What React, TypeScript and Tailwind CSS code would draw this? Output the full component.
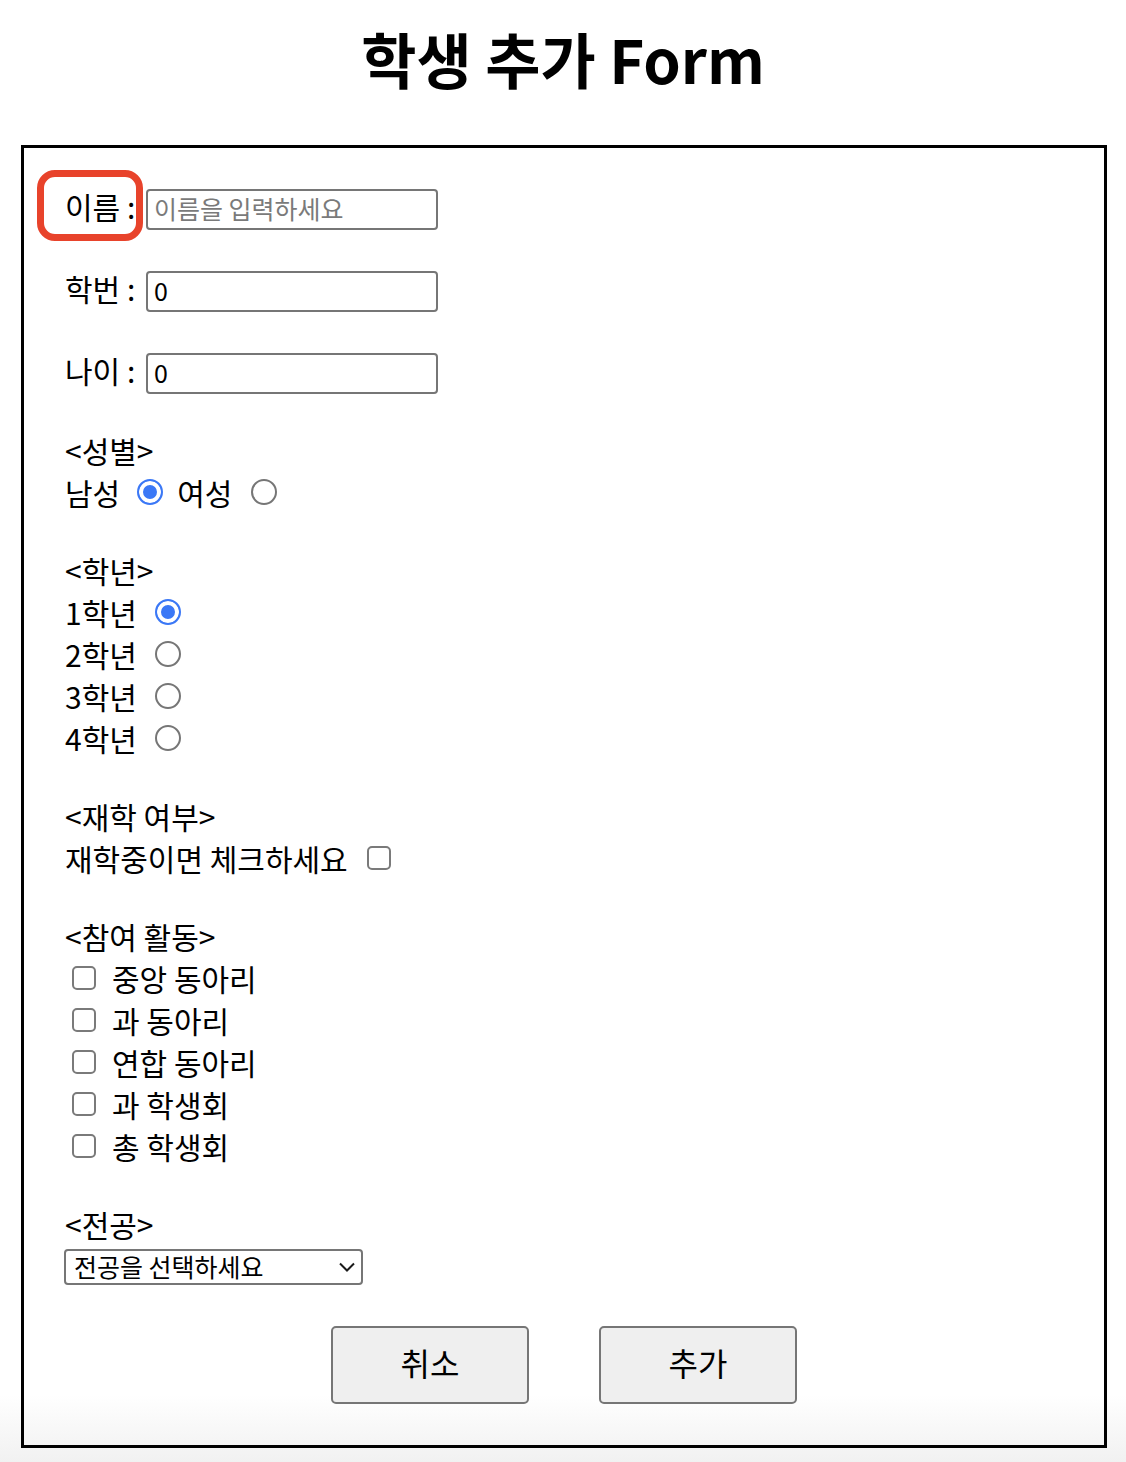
import { useState } from "react";

const font = { fontFamily: '"Noto Sans CJK KR", "Noto Sans", sans-serif' };

const radioClass =
  "appearance-none m-0 w-[26px] h-[26px] shrink-0 rounded-full border-2 border-[#767676] bg-white checked:border-[#3b78f6] checked:bg-[#3b78f6] checked:shadow-[inset_0_0_0_4px_#ffffff]";
const checkClass =
  "appearance-none m-0 w-[24px] h-[24px] shrink-0 rounded-[5px] border-2 border-[#7a7a7a] bg-white checked:bg-[#3b78f6] checked:border-[#3b78f6]";
const inputClass =
  "w-[292px] h-[41px] rounded-[4px] border-2 border-[#767676] px-[6px] pb-[4px] text-[25px] text-black placeholder:text-[#7a7a7a] outline-none";
const btnClass =
  "w-[198px] h-[78px] rounded-[5px] border-2 border-[#767676] bg-[#efefef] pb-[6px] text-[32px] text-black";

const grades = ["1학년", "2학년", "3학년", "4학년"];
const activities = ["중앙 동아리", "과 동아리", "연합 동아리", "과 학생회", "총 학생회"];

export default function App() {
  const [name, setName] = useState("");
  const [studentNo, setStudentNo] = useState("0");
  const [age, setAge] = useState("0");
  const [gender, setGender] = useState("male");
  const [grade, setGrade] = useState("1학년");
  const [enrolled, setEnrolled] = useState(false);
  const [acts, setActs] = useState<string[]>([]);
  const [major, setMajor] = useState("");

  function toggleAct(a: string) {
    setActs((s) => (s.includes(a) ? s.filter((x) => x !== a) : [...s, a]));
  }

  return (
    <div
      className="min-h-[1462px] bg-[linear-gradient(to_bottom,#ffffff_1395px,#f1f1f1_1462px)] text-black"
      style={font}
    >
      <h1 className="pt-[22px] text-center text-[60px] font-bold leading-[72px]">학생 추가 Form</h1>

      <form
        className="mt-[51px] ml-[21px] mr-[19px] border-[3px] border-black pl-[41px] pt-[41px] pb-[41px] text-[30px] leading-[42px]"
        onSubmit={(e) => e.preventDefault()}
      >
        <div className="flex flex-col gap-[41px]">
          <div className="flex h-[41px] items-center">
            <label className="relative w-[81px] shrink-0 pb-[7px]">
              이름 :
              <span className="pointer-events-none absolute left-[-28px] top-[-15px] h-[71px] w-[106px] rounded-[18px] border-[7px] border-[#e8432b]" />
            </label>
            <input
              className={inputClass}
              value={name}
              onChange={(e) => setName(e.target.value)}
              placeholder="이름을 입력하세요"
            />
          </div>
          <div className="flex h-[41px] items-center">
            <label className="w-[81px] shrink-0 pb-[7px]">학번 :</label>
            <input className={inputClass} value={studentNo} onChange={(e) => setStudentNo(e.target.value)} />
          </div>
          <div className="flex h-[41px] items-center">
            <label className="w-[81px] shrink-0 pb-[7px]">나이 :</label>
            <input className={inputClass} value={age} onChange={(e) => setAge(e.target.value)} />
          </div>
        </div>

        <div className="mt-[35px]">
          <p>&lt;성별&gt;</p>
          <div className="flex h-[42px] items-center">
            <span>남성</span>
            <input
              type="radio"
              name="gender"
              className={`${radioClass} ml-[17px] mr-[14px]`}
              checked={gender === "male"}
              onChange={() => setGender("male")}
            />
            <span>여성</span>
            <input
              type="radio"
              name="gender"
              className={`${radioClass} ml-[19px]`}
              checked={gender === "female"}
              onChange={() => setGender("female")}
            />
          </div>
        </div>

        <div className="mt-[36px]">
          <p>&lt;학년&gt;</p>
          {grades.map((g) => (
            <div key={g} className="flex h-[42px] items-center">
              <span>{g}</span>
              <input
                type="radio"
                name="grade"
                className={`${radioClass} ml-[18px]`}
                checked={grade === g}
                onChange={() => setGrade(g)}
              />
            </div>
          ))}
        </div>

        <div className="mt-[36px]">
          <p>&lt;재학 여부&gt;</p>
          <div className="flex h-[42px] items-center">
            <span>재학중이면 체크하세요</span>
            <input
              type="checkbox"
              className={`${checkClass} ml-[19px]`}
              checked={enrolled}
              onChange={(e) => setEnrolled(e.target.checked)}
            />
          </div>
        </div>

        <div className="mt-[36px]">
          <p>&lt;참여 활동&gt;</p>
          {activities.map((a) => (
            <label key={a} className="flex h-[42px] items-center">
              <input
                type="checkbox"
                className={`${checkClass} ml-[7px] mr-[16px]`}
                checked={acts.includes(a)}
                onChange={() => toggleAct(a)}
              />
              <span>{a}</span>
            </label>
          ))}
        </div>

        <div className="mt-[36px]">
          <p>&lt;전공&gt;</p>
          <div className="relative mt-[4px] ml-[-1px] w-[299px]">
            <select
              className="block h-[36px] w-full appearance-none rounded-[4px] border-2 border-[#767676] bg-white pl-[8px] pb-[3px] text-[25px] leading-[30px] text-black outline-none"
              value={major}
              onChange={(e) => setMajor(e.target.value)}
            >
              <option value="">전공을 선택하세요</option>
              <option value="cs">컴퓨터공학</option>
              <option value="ee">전자공학</option>
              <option value="me">기계공학</option>
            </select>
            <svg
              className="pointer-events-none absolute right-[7px] top-[12px]"
              width="18"
              height="12"
              viewBox="0 0 18 12"
              fill="none"
            >
              <path d="M2 2.5 L9 9.5 L16 2.5" stroke="#1a1a1a" strokeWidth="2" />
            </svg>
          </div>
        </div>

        <div className="mt-[41px] mr-[41px] flex justify-center gap-[70px]">
          <button type="button" className={btnClass}>
            취소
          </button>
          <button type="submit" className={btnClass}>
            추가
          </button>
        </div>
      </form>
    </div>
  );
}
